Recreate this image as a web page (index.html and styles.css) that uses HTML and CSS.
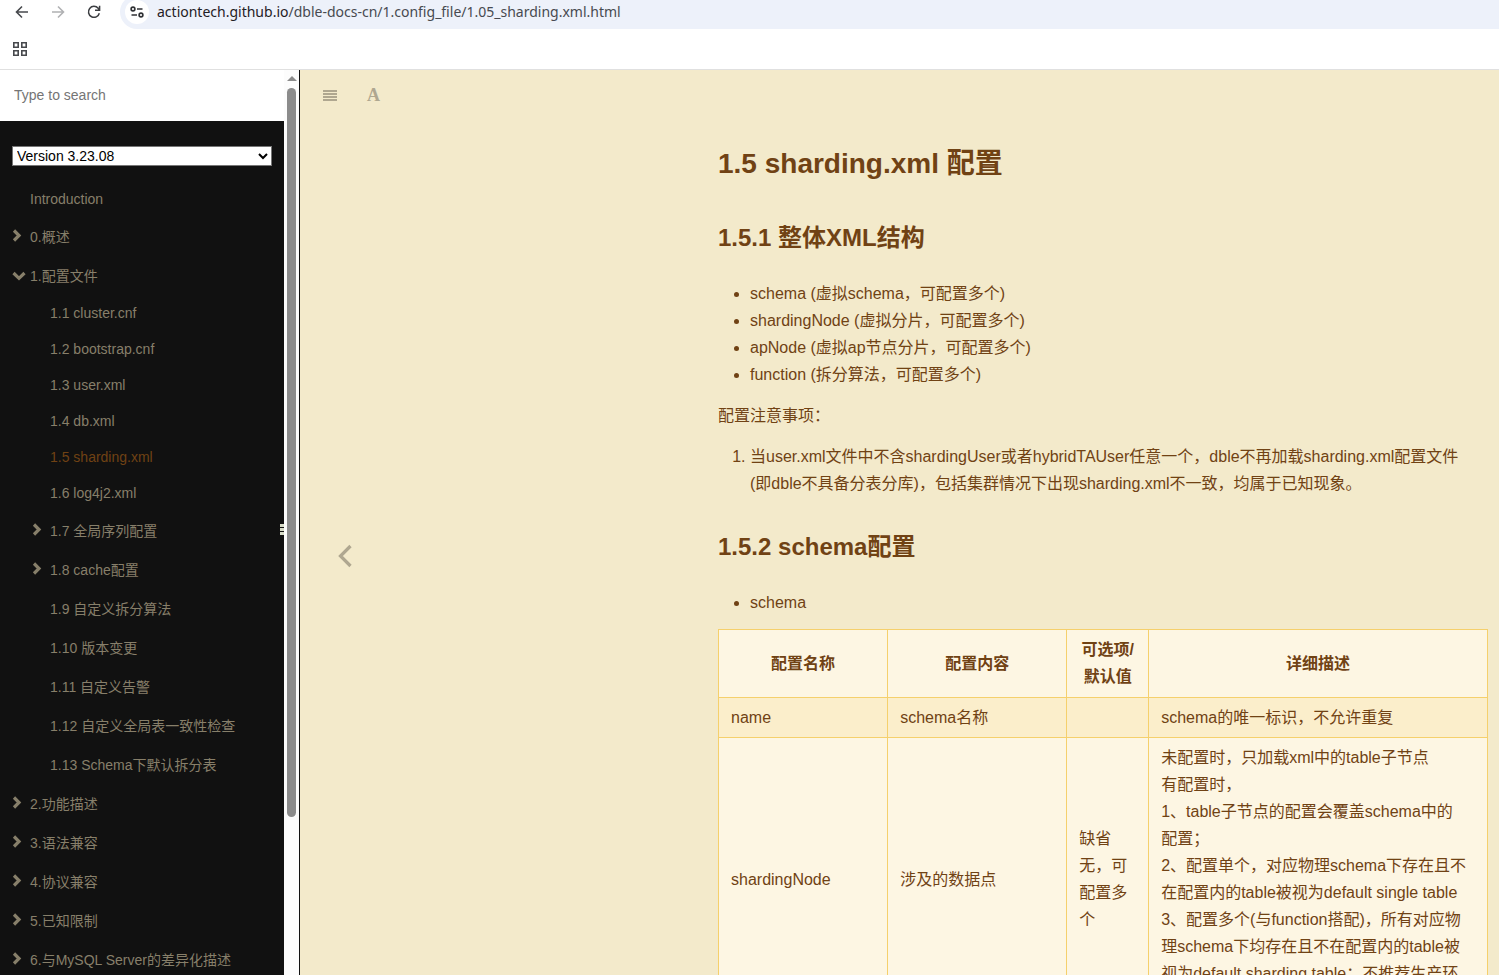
FILE: index.html
```html
<!DOCTYPE html>
<html lang="zh-CN">
<head>
    <meta charset="UTF-8">
    <meta name="viewport" content="width=device-width, initial-scale=1.0">
    <title>1.5 sharding.xml 配置</title>
    <link rel="stylesheet" href="styles.css">
</head>
<body>
    <svg class="sprite" aria-hidden="true">
        <symbol id="right" viewBox="0 0 10 14"><path d="M2 1.500 7 6.500 2 11.500" fill="none" stroke="currentColor" stroke-width="3.200"/></symbol>
        <symbol id="down" viewBox="0 0 14 10"><path d="M1.500 2 7 7.300 12.500 2" fill="none" stroke="currentColor" stroke-width="3.200"/></symbol>
    </svg>

    <header class="browser">
        <div class="toolbar">
            <button class="tool" aria-label="Back">
                <svg width="14" height="14" viewBox="0 0 14 14"><path d="M13 7H2M7 1.500 1.500 7 7 12.500" fill="none" stroke="#47494d" stroke-width="1.600"/></svg>
            </button>
            <button class="tool" aria-label="Forward">
                <svg width="14" height="14" viewBox="0 0 14 14"><path d="M1 7h11M7 1.500 12.500 7 7 12.500" fill="none" stroke="#b0b1b3" stroke-width="1.600"/></svg>
            </button>
            <button class="tool" aria-label="Reload">
                <svg width="14" height="14" viewBox="0 0 14 14"><path d="M12.300 8.200A5.500 5.500 0 1 1 11.200 3.300L12.400 4.900M12.600 .8v4.500H8" fill="none" stroke="#3c3e42" stroke-width="1.500"/></svg>
            </button>
            <div class="address">
                <span class="site-info">
                    <svg width="14" height="12" viewBox="0 0 14 12" fill="none" stroke="#2f3135" stroke-width="1.600"><circle cx="3" cy="3" r="1.900"/><path d="M7 3h5.500M1.500 9H7"/><circle cx="11" cy="9" r="1.900"/></svg>
                </span>
                <span class="url"><b>actiontech.github.io</b>/dble-docs-cn/1.config_file/1.05_sharding.xml.html</span>
            </div>
        </div>
        <div class="bookmarks">
            <button class="tool" aria-label="Apps">
                <svg width="14" height="14" viewBox="0 0 14 14" fill="none" stroke="#47494d" stroke-width="1.600"><path d="M.8.8h4.400v4.400H.8zM8.800.8h4.400v4.400H8.800zM.8 8.800h4.400v4.400H.8zM8.800 8.800h4.400v4.400H8.800z"/></svg>
            </button>
        </div>
    </header>

    <div class="book">
        <aside class="sidebar">
            <div class="summary">
                <input class="search" type="text" placeholder="Type to search" aria-label="Type to search">
                <select class="version" aria-label="Version">
                    <option>Version 3.23.08</option>
                </select>
                <ul class="chapters">
                    <li><a href="#">Introduction</a></li>
                    <li><a class="cjk" href="#"><svg class="right"><use href="#right"/></svg>0.概述</a></li>
                    <li><a class="cjk" href="#"><svg class="down"><use href="#down"/></svg>1.配置文件</a>
                        <ul class="articles">
                            <li><a href="#">1.1 cluster.cnf</a></li>
                            <li><a href="#">1.2 bootstrap.cnf</a></li>
                            <li><a href="#">1.3 user.xml</a></li>
                            <li><a href="#">1.4 db.xml</a></li>
                            <li><a class="active" href="#">1.5 sharding.xml</a></li>
                            <li><a href="#">1.6 log4j2.xml</a></li>
                            <li><a class="cjk" href="#"><svg class="right"><use href="#right"/></svg>1.7 全局序列配置</a></li>
                            <li><a class="cjk" href="#"><svg class="right"><use href="#right"/></svg>1.8 cache配置</a></li>
                            <li><a class="cjk" href="#">1.9 自定义拆分算法</a></li>
                            <li><a class="cjk" href="#">1.10 版本变更</a></li>
                            <li><a class="cjk" href="#">1.11 自定义告警</a></li>
                            <li><a class="cjk" href="#">1.12 自定义全局表一致性检查</a></li>
                            <li><a class="cjk" href="#">1.13 Schema下默认拆分表</a></li>
                        </ul>
                    </li>
                    <li><a class="cjk" href="#"><svg class="right"><use href="#right"/></svg>2.功能描述</a></li>
                    <li><a class="cjk" href="#"><svg class="right"><use href="#right"/></svg>3.语法兼容</a></li>
                    <li><a class="cjk" href="#"><svg class="right"><use href="#right"/></svg>4.协议兼容</a></li>
                    <li><a class="cjk" href="#"><svg class="right"><use href="#right"/></svg>5.已知限制</a></li>
                    <li><a class="cjk" href="#"><svg class="right"><use href="#right"/></svg>6.与MySQL Server的差异化描述</a></li>
                </ul>
            </div>
            <div class="scrollbar">
                <span class="scroll-up"></span>
                <span class="thumb"></span>
                <span class="track-rest"></span>
            </div>
            <span class="grip"><i></i><i></i><i></i></span>
        </aside>

        <main class="page">
            <div class="page-tools">
                <button class="page-tool" aria-label="Toggle summary">
                    <svg width="14" height="11" viewBox="0 0 14 11"><path d="M0 1h14M0 4h14M0 7h14M0 10h14" stroke="currentColor" stroke-width="2"/></svg>
                </button>
                <button class="page-tool font-tool" aria-label="Font settings">A</button>
            </div>
            <a class="prev" href="#" aria-label="Previous page">
                <svg width="16" height="24" viewBox="0 0 16 24"><path d="M13.500 2 3.500 12l10 10" fill="none" stroke="currentColor" stroke-width="3.200"/></svg>
            </a>
            <article class="content">
                <h1>1.5 sharding.xml 配置</h1>
                <h2>1.5.1 整体XML结构</h2>
                <ul>
                    <li>schema (虚拟schema，可配置多个)</li>
                    <li>shardingNode (虚拟分片，可配置多个)</li>
                    <li>apNode (虚拟ap节点分片，可配置多个)</li>
                    <li>function (拆分算法，可配置多个)</li>
                </ul>
                <p>配置注意事项：</p>
                <ol>
                    <li>当user.xml文件中不含shardingUser或者hybridTAUser任意一个，dble不再加载sharding.xml配置文件<br>(即dble不具备分表分库)，包括集群情况下出现sharding.xml不一致，均属于已知现象。</li>
                </ol>
                <h2>1.5.2 schema配置</h2>
                <ul>
                    <li>schema</li>
                </ul>
                <table>
                    <colgroup>
                        <col class="col-name">
                        <col class="col-content">
                        <col class="col-default">
                        <col>
                    </colgroup>
                    <thead>
                        <tr>
                            <th>配置名称</th>
                            <th>配置内容</th>
                            <th>可选项/<br>默认值</th>
                            <th>详细描述</th>
                        </tr>
                    </thead>
                    <tbody>
                        <tr class="striped">
                            <td>name</td>
                            <td>schema名称</td>
                            <td></td>
                            <td>schema的唯一标识，不允许重复</td>
                        </tr>
                        <tr>
                            <td>shardingNode</td>
                            <td>涉及的数据点</td>
                            <td>缺省<br>无，可配置多个</td>
                            <td>未配置时，只加载xml中的table子节点<br>有配置时，<br>1、table子节点的配置会覆盖schema中的<br>配置；<br>2、配置单个，对应物理schema下存在且不<br>在配置内的table被视为default single table<br>3、配置多个(与function搭配)，所有对应物<br>理schema下均存在且不在配置内的table被<br>视为default sharding table；不推荐生产环<br>境使用</td>
                        </tr>
                    </tbody>
                </table>
            </article>
        </main>
    </div>
</body>
</html>
```

FILE: styles.css
```css
* {
    box-sizing: border-box;
}
body {
    margin: 0;
    height: 100vh;
    overflow: hidden;
    display: flex;
    flex-direction: column;
    font-family: "Liberation Sans", "Noto Sans CJK SC", sans-serif;
    background: #fff;
}
button {
    border: none;
    background: none;
    padding: 0;
    cursor: pointer;
}
a {
    text-decoration: none;
}
svg {
    display: block;
}
.sprite {
    display: none;
}

/* browser bar */
.browser {
    flex: none;
    overflow: hidden;
    border-bottom: 1px solid #e0e0e0;
}
.toolbar {
    display: flex;
    align-items: center;
    height: 34px;
    margin-top: -5px;
    padding-left: 15px;
}
.tool {
    width: 14px;
    height: 14px;
    margin-right: 22px;
}
.address {
    flex: 1;
    display: flex;
    align-items: center;
    gap: 8px;
    height: 34px;
    margin-left: -3px;
    padding-left: 5px;
    border-radius: 17px 0 0 17px;
    background: #edf1fa;
}
.site-info {
    display: flex;
    align-items: center;
    justify-content: center;
    width: 24px;
    height: 24px;
    border-radius: 50%;
    background: #fff;
}
.url {
    padding-bottom: 2px;
    font: 14px "Noto Sans", "Open Sans", sans-serif;
    color: #474a50;
}
.url b {
    font-weight: normal;
    color: #1f2024;
}
.bookmarks {
    display: flex;
    align-items: center;
    height: 40px;
    padding-left: 13px;
}

/* sidebar */
.book {
    flex: 1;
    min-height: 0;
    display: flex;
}
.sidebar {
    position: relative;
    flex: none;
    display: flex;
    width: 300px;
    border-right: 1px solid #111;
}
.summary {
    flex: 1;
    overflow: hidden;
    background: #111;
}
.search {
    display: block;
    width: 100%;
    height: 51px;
    padding: 0 14px 2px;
    border: none;
    font: 14px "Liberation Sans", sans-serif;
}
.search::placeholder {
    color: #757575;
}
.version {
    display: block;
    width: calc(100% - 24px);
    height: 20px;
    margin: 25px 12px 15px;
    padding: 0;
    border: 1px solid #767676;
    border-radius: 0;
    background-color: #fff;
    color: #000;
    font: 14px "Liberation Sans", sans-serif;
}
.chapters,
.articles {
    margin: 0;
    padding: 0;
    list-style: none;
}
.articles {
    padding-left: 20px;
}
.chapters a {
    position: relative;
    display: block;
    padding: 10px 0 10px 30px;
    font-size: 14px;
    line-height: 16px;
    color: #877f6a;
    white-space: nowrap;
}
.chapters a.cjk {
    padding-top: 11px;
    padding-bottom: 9px;
    line-height: 19px;
}
.chapters a.active {
    color: #704214;
}
.chapters svg {
    position: absolute;
    left: 12px;
    top: 12px;
}
.right {
    width: 10px;
    height: 14px;
}
.down {
    width: 14px;
    height: 10px;
    margin-top: 3px;
}
.scrollbar {
    flex: none;
    display: flex;
    flex-direction: column;
    align-items: center;
    width: 15px;
    background: #fcfcfc;
}
.scroll-up {
    margin: 6px 0 7px;
    border: 5px solid transparent;
    border-top: none;
    border-bottom-color: #8b8b8b;
}
.thumb {
    flex: 729;
    width: 9px;
    border-radius: 5px;
    background: #8b8b8b;
}
.track-rest {
    flex: 158;
}
.grip {
    position: absolute;
    right: 15px;
    top: 50%;
    display: flex;
    flex-direction: column;
    gap: 1px;
    padding-top: 1px;
}
.grip i {
    width: 4px;
    height: 3px;
    background: #d8dcc8;
}

/* page */
.page {
    position: relative;
    flex: 1;
    min-width: 0;
    overflow: hidden;
    background: #f3eacb;
    color: #704214;
}
.page-tools {
    display: flex;
    align-items: center;
    gap: 30px;
    height: 50px;
    padding-left: 23px;
}
.page-tool {
    color: #afa790;
}
.font-tool {
    font: bold 18px "Liberation Serif", serif;
}
.prev {
    position: absolute;
    left: 37px;
    top: 474px;
    color: #afa790;
}
.content {
    max-width: 770px;
    margin: 22px 11px 0 auto;
    font-size: 16px;
    line-height: 27px;
}
h1,
h2,
p,
ul,
ol {
    margin: 0;
}
h1 {
    margin-bottom: 32px;
    font-size: 28px;
    line-height: 44px;
}
h2 {
    margin-bottom: 22px;
    font-size: 24px;
    line-height: 40px;
}
.content ul,
.content ol {
    margin-bottom: 14px;
    padding-left: 32px;
}
.content p {
    margin-bottom: 14px;
}
.content ol {
    margin-bottom: 30px;
}
.content table {
    width: 100%;
    margin-top: -1px;
    table-layout: fixed;
    border-collapse: collapse;
    background: #fdf6e3;
}
.col-name {
    width: 22%;
}
.col-content {
    width: 179px;
}
.col-default {
    width: 82px;
}
th,
td {
    padding: 6px 12px;
    border: 1px solid #f5d06c;
}
th {
    padding-bottom: 7px;
}
.striped {
    background: #fbeecb;
}
```
